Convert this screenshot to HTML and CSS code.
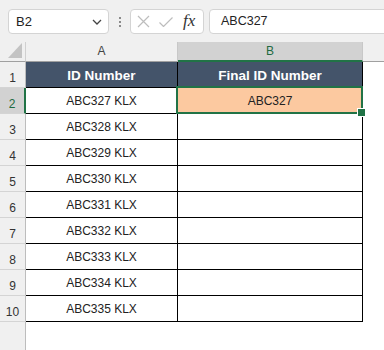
FILE: index.html
```html
<!DOCTYPE html>
<html lang="en">
<head>
  <meta charset="UTF-8" />
  <meta name="viewport" content="width=device-width, initial-scale=1" />
  <title>Final ID Number</title>
  <link rel="stylesheet" href="styles.css">
</head>
<body>

  <div class="toolbar">
    <div class="name-box">
      <span>B2</span>
      <svg class="chevron" width="10" height="6" viewBox="0 0 10 6"><path d="M1 1l4 4 4-4" fill="none" stroke="#444" stroke-width="1.3"/></svg>
    </div>
    <div class="dots"><i></i><i></i><i></i></div>
    <div class="fx-box">
      <svg width="13" height="13" viewBox="0 0 13 13"><path d="M1 1l11 11M12 1L1 12" stroke="#bdbdbd" stroke-width="1.2"/></svg>
      <svg width="14" height="10" viewBox="0 0 14 10"><path d="M0.5 5.5l4 4 9-9" fill="none" stroke="#bdbdbd" stroke-width="1.2"/></svg>
      <span class="fx">fx</span>
    </div>
    <div class="formula">ABC327</div>
  </div>

  <div class="sheet">
    <div class="corner"><svg width="14" height="15" viewBox="0 0 14 15"><path d="M0 15h14V0z" fill="#c3c3c3"/></svg></div>
    <div class="colhead">A</div>
    <div class="colhead active">B</div>
    <div class="colhead rest"></div>

    <div class="rowhead">1</div>
    <div class="cell head">ID Number</div>
    <div class="cell head">Final ID Number</div>
    <div class="blank"></div>

    <div class="rowhead active">2</div>
    <div class="cell">ABC327 KLX</div>
    <div class="cell result sel">ABC327</div>
    <div class="blank"></div>

    <div class="rowhead">3</div>
    <div class="cell">ABC328 KLX</div>
    <div class="cell"></div>
    <div class="blank"></div>

    <div class="rowhead">4</div>
    <div class="cell">ABC329 KLX</div>
    <div class="cell"></div>
    <div class="blank"></div>

    <div class="rowhead">5</div>
    <div class="cell">ABC330 KLX</div>
    <div class="cell"></div>
    <div class="blank"></div>

    <div class="rowhead">6</div>
    <div class="cell">ABC331 KLX</div>
    <div class="cell"></div>
    <div class="blank"></div>

    <div class="rowhead">7</div>
    <div class="cell">ABC332 KLX</div>
    <div class="cell"></div>
    <div class="blank"></div>

    <div class="rowhead">8</div>
    <div class="cell">ABC333 KLX</div>
    <div class="cell"></div>
    <div class="blank"></div>

    <div class="rowhead">9</div>
    <div class="cell">ABC334 KLX</div>
    <div class="cell"></div>
    <div class="blank"></div>

    <div class="rowhead">10</div>
    <div class="cell">ABC335 KLX</div>
    <div class="cell"></div>
    <div class="blank"></div>

    <div class="rowhead empty"></div>
    <div class="blank"></div>
    <div class="blank"></div>
    <div class="blank"></div>
  </div>

</body>
</html>
```

FILE: styles.css
```css
* {
  box-sizing: border-box;
}

body {
  margin: 0;
  width: 384px;
  height: 350px;
  overflow: hidden;
  background: #fff;
  font-family: "Liberation Sans", Arial, sans-serif;
  color: #222;
}

.toolbar {
  height: 42px;
  background: #f0f0f0;
  display: flex;
  align-items: flex-start;
  padding: 9px 0 0 8px;
}

.name-box {
  width: 101px;
  height: 25px;
  background: #fff;
  border: 1px solid #d4d4d4;
  border-radius: 4px;
  display: flex;
  align-items: center;
  justify-content: space-between;
  padding: 0 6px 0 7px;
  font-size: 13px;
}

.chevron {
  margin-top: 1px;
}

.dots {
  width: 21px;
  height: 25px;
  display: flex;
  flex-direction: column;
  align-items: center;
  justify-content: center;
  gap: 2px;
}

.dots i {
  width: 2px;
  height: 2px;
  background: #8a8a8a;
}

.fx-box {
  width: 74px;
  height: 25px;
  background: #fff;
  border: 1px solid #d4d4d4;
  border-radius: 4px;
  display: flex;
  align-items: center;
  gap: 9px;
  padding-left: 6px;
}

.fx {
  font-family: "Liberation Serif", "Times New Roman", serif;
  font-style: italic;
  font-size: 17px;
  color: #333;
  margin-left: 1px;
  margin-top: -1px;
}

.formula {
  flex: 1;
  height: 25px;
  margin-left: 5px;
  margin-right: -6px;
  background: #fff;
  border: 1px solid #d4d4d4;
  border-radius: 4px;
  padding-left: 11px;
  font-size: 12.5px;
  line-height: 23px;
}

.sheet {
  display: grid;
  grid-template-columns: 26px 152px 185px 1fr;
  grid-template-rows: 20px repeat(10, 26px) 1fr;
  height: 308px;
}

.corner {
  background: #f0f0f0;
  border-right: 1px solid #d0d0d0;
  border-bottom: 1px solid #a0a0a0;
  display: flex;
  align-items: flex-end;
  justify-content: flex-end;
  padding: 0 3px 3px 0;
}

.colhead {
  background: #f0f0f0;
  border-right: 1px solid #c8c8c8;
  border-bottom: 1px solid #a0a0a0;
  text-align: center;
  font-size: 12px;
  line-height: 19px;
  color: #444;
}

.colhead.active {
  background: #d2d2d2;
  color: #1e6b41;
  border-bottom: 2px solid #217346;
}

.colhead.rest {
  border-right: none;
}

.rowhead {
  background: #f0f0f0;
  border-right: 1px solid #bdbdbd;
  border-bottom: 1px solid #d4d4d4;
  text-align: center;
  font-size: 12px;
  padding-top: 9px;
  line-height: 14px;
  color: #333;
}

.rowhead.active {
  background: #d2d2d2;
  color: #1e6b41;
  border-right: 2px solid #217346;
}

.rowhead.empty {
  border-bottom: none;
}

.cell {
  border-right: 1px solid #000;
  border-bottom: 1px solid #000;
  text-align: center;
  font-size: 12px;
  padding-top: 2px;
  line-height: 23px;
}

.cell.head {
  background: #44546a;
  color: #fff;
  font-weight: bold;
  font-size: 13.5px;
}

.cell.result {
  background: #fcc9a0;
}

.sel {
  position: relative;
}

.sel::before {
  content: "";
  position: absolute;
  top: -2px;
  left: -2px;
  right: -1px;
  bottom: -1px;
  border: 2px solid #217346;
}

.sel::after {
  content: "";
  position: absolute;
  right: -4px;
  bottom: -4px;
  width: 7px;
  height: 7px;
  background: #217346;
  border: 1px solid #fff;
}

.blank {
  background: #fff;
}
```
